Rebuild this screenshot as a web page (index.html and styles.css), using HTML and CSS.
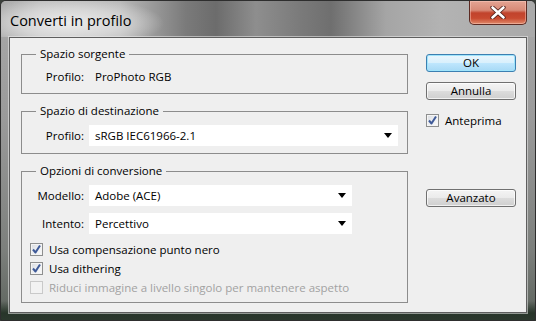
FILE: index.html
```html
<!DOCTYPE html>
<html lang="it">
<head>
<meta charset="utf-8">
<title>Converti in profilo</title>
<link rel="stylesheet" href="styles.css">
</head>
<body>
<div class="window">
  <div class="titlebar">
    <span class="title">Converti in profilo</span>
    <div class="close">
      <svg width="16" height="13" viewBox="0 0 16 13">
        <path d="M2.5 1.5 L13.5 11.5 M13.5 1.5 L2.5 11.5" stroke="#4a1a14" stroke-width="4.2" stroke-linecap="round" fill="none"/>
        <path d="M2.5 1.5 L13.5 11.5 M13.5 1.5 L2.5 11.5" stroke="#ffffff" stroke-width="2.6" stroke-linecap="round" fill="none"/>
      </svg>
    </div>
  </div>
  <div class="panel">
    <div class="left">
      <fieldset class="group g1">
        <legend>Spazio sorgente</legend>
        <div class="row">
          <span class="lbl">Profilo:</span>
          <span class="value">ProPhoto RGB</span>
        </div>
      </fieldset>
      <fieldset class="group g2">
        <legend>Spazio di destinazione</legend>
        <div class="row">
          <span class="lbl">Profilo:</span>
          <div class="select wide"><span>sRGB IEC61966-2.1</span><i class="arrow"></i></div>
        </div>
      </fieldset>
      <fieldset class="group g3">
        <legend>Opzioni di conversione</legend>
        <div class="row">
          <span class="lbl">Modello:</span>
          <div class="select"><span>Adobe (ACE)</span><i class="arrow"></i></div>
        </div>
        <div class="row gap">
          <span class="lbl">Intento:</span>
          <div class="select"><span>Percettivo</span><i class="arrow"></i></div>
        </div>
        <div class="checks">
          <div class="check"><span class="box on"><svg width="11" height="11" viewBox="0 0 11 11"><path d="M2 5.5 L4.5 8.5 L9 1.5" stroke="#3f5a98" stroke-width="2" fill="none" stroke-linejoin="round"/></svg></span>Usa compensazione punto nero</div>
          <div class="check"><span class="box on"><svg width="11" height="11" viewBox="0 0 11 11"><path d="M2 5.5 L4.5 8.5 L9 1.5" stroke="#3f5a98" stroke-width="2" fill="none" stroke-linejoin="round"/></svg></span>Usa dithering</div>
          <div class="check disabled"><span class="box"></span>Riduci immagine a livello singolo per mantenere aspetto</div>
        </div>
      </fieldset>
    </div>
    <div class="right">
      <button class="btn default">OK</button>
      <button class="btn annulla">Annulla</button>
      <div class="check preview"><span class="box on"><svg width="11" height="11" viewBox="0 0 11 11"><path d="M2 5.5 L4.5 8.5 L9 1.5" stroke="#3f5a98" stroke-width="2" fill="none" stroke-linejoin="round"/></svg></span>Anteprima</div>
      <button class="btn avanzato">Avanzato</button>
    </div>
  </div>
</div>
</body>
</html>
```

FILE: styles.css
```css
* { box-sizing: border-box; }
html, body { margin: 0; padding: 0; }
body {
  width: 536px;
  height: 321px;
  overflow: hidden;
  font-family: "Open Sans", "Liberation Sans", sans-serif;
  font-size: 11px;
  color: #000;
  background: #3a3f3a;
}
.window {
  width: 536px;
  height: 321px;
  border: 1px solid #2e2e2e;
  border-radius: 6px 6px 2px 2px;
  background:
    linear-gradient(to bottom, rgba(0,0,0,0) 0, rgba(0,0,0,0) 300px, rgba(30,45,32,0.85) 312px, rgba(40,52,42,0.9) 321px),
    linear-gradient(to bottom, #a9a9a9 0, #9a9a9a 120px, #7c7f7c 250px, #5b625b 321px);
  display: flex;
  flex-direction: column;
}
.titlebar {
  height: 36px;
  display: flex;
  justify-content: space-between;
  align-items: flex-start;
  background:
    radial-gradient(ellipse 95px 26px at 68px 22px, rgba(238,238,238,0.95) 0, rgba(225,225,225,0.7) 55%, rgba(200,200,200,0) 100%),
    linear-gradient(to right, #aaaaaa 0, #bcbcbc 40px, #b8b8b8 120px, #7a7a7a 185px, #6c6c6c 215px, #8e8e8e 255px, #7a7a7a 300px, #6f6f6f 330px, #a5a5a5 385px, #b3b3b3 440px, #a9a9a9 535px);
  border-radius: 5px 5px 0 0;
}
.title {
  font-size: 14.5px;
  color: #000;
  margin: 11px 0 0 9px;
  line-height: 18px;
}
.close {
  width: 58px;
  height: 24px;
  margin-right: 8px;
  border: 1px solid #5c2a22;
  border-top: none;
  border-radius: 0 0 5px 5px;
  background:
    linear-gradient(to bottom, #e4a493 0, #d88a77 40%, #c1432c 52%, #c84a30 75%, #e08a6a 100%);
  box-shadow: inset 0 0 0 1px rgba(255,210,200,0.45);
  display: flex;
  align-items: center;
  justify-content: center;
}
.close svg { display: block; margin-top: 0; }
.panel {
  margin: 0 8px 7px 8px;
  flex: 1;
  background: #efefef;
  border: 1px solid #5e5e5e;
  box-shadow: 0 0 0 1px rgba(235,235,235,0.55);
  display: flex;
  align-items: flex-start;
}
.left {
  width: 387px;
  margin: 9px 0 0 11px;
}
.group {
  margin: 0;
  padding: 0 0 0 8px;
  border: 1px solid #8c8c8c;
  min-width: 0;
}
.group + .group { margin-top: 10px; }
legend {
  margin-left: 6px;
  padding: 0 4px;
  line-height: 14px;
  height: 14px;
  font-size: 11.5px;
}
.g1 { height: 47px; padding-top: 5px; }
.g2 { height: 50px; padding-top: 7px; }
.g3 { height: 139px; padding-top: 7px; }
.row {
  display: flex;
  align-items: center;
  height: 21px;
}
.row.gap { margin-top: 7px; }
.lbl {
  width: 54px;
  text-align: right;
  margin-right: 5px;
  font-size: 11.5px;
}
.value {
  padding-left: 6px;
  font-size: 11.5px;
}
.select {
  width: 263px;
  height: 21px;
  background: #fff;
  display: flex;
  align-items: center;
  justify-content: space-between;
  padding: 0 6px 0 6px;
  font-size: 11.5px;
}
.select.wide { width: 309px; }
.arrow {
  width: 0;
  height: 0;
  border-left: 4.5px solid transparent;
  border-right: 4.5px solid transparent;
  border-top: 5px solid #000;
}
.checks { margin-top: 6px; }
.check {
  display: flex;
  align-items: center;
  height: 19px;
  font-size: 11.5px;
}
.box {
  width: 13px;
  height: 13px;
  border: 1px solid #8e8f8f;
  background: linear-gradient(135deg, #d8dbe0 0, #eceef1 50%, #fbfbfb 100%);
  box-shadow: inset 0 0 0 1px #f4f4f4;
  margin-right: 6px;
  display: flex;
  align-items: center;
  justify-content: center;
  flex: none;
}
.box svg { display: block; }
.check.disabled { color: #a2a2a2; }
.check.disabled .box {
  border-color: #c9c9c9;
  background: #f2f2f2;
  box-shadow: none;
}
.right {
  width: 90px;
  margin: 16px 0 0 18px;
  display: flex;
  flex-direction: column;
}
.btn {
  height: 18px;
  width: 90px;
  padding: 0;
  font-family: inherit;
  font-size: 11.5px;
  color: #000;
  border: 1px solid #707070;
  border-radius: 3px;
  background: linear-gradient(to bottom, #f4f4f4 0, #ebebeb 48%, #dcdcdc 52%, #cfcfcf 100%);
  box-shadow: inset 0 0 0 1px rgba(255,255,255,0.7);
  line-height: 16px;
}
.btn.default {
  border-color: #3c7fb1;
  background: linear-gradient(to bottom, #eaf6fd 0, #d9f0fc 48%, #bee6fd 52%, #a7d9f5 100%);
  box-shadow: inset 0 0 0 1px #9fe4fb;
}
.btn.annulla { margin-top: 10px; }
.check.preview { margin-top: 11px; }
.btn.avanzato { margin-top: 59px; }
```
